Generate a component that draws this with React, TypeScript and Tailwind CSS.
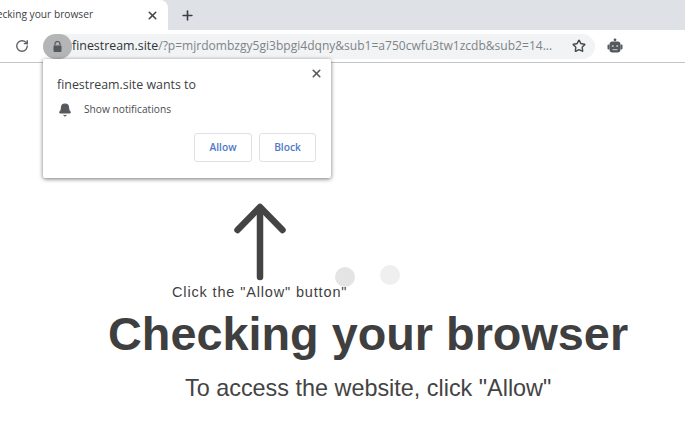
import { Plus, RotateCw, Star, X, Bell } from "lucide-react"

const ui = "font-['Open_Sans',sans-serif]"
const arial = "font-['Liberation_Sans',Arial,sans-serif]"

function TabStrip() {
  return (
    <div className="flex h-[30px] items-stretch bg-[#dee1e6]">
      <div className="flex w-[168px] items-center justify-between overflow-hidden rounded-tr-lg bg-white pr-[9px]">
        <span className={`${ui} ml-[-16px] whitespace-nowrap text-[10.2px] text-[#3c4043]`}>Checking your browser</span>
        <X className="h-[13px] w-[13px] text-[#45484c]" strokeWidth={3} />
      </div>
      <div className="ml-[12px] flex items-center">
        <Plus className="h-[15px] w-[15px] text-[#3c4043]" strokeWidth={2.6} />
      </div>
    </div>
  )
}

function Toolbar() {
  return (
    <div className="flex h-[33px] items-center border-b border-[#c4c5c8] bg-white">
      <RotateCw className="ml-[15px] h-[14px] w-[14px] text-[#5f6368]" strokeWidth={2.4} />
      <div className="ml-[14px] flex h-[25px] w-[552px] items-center rounded-full bg-[#f1f3f4]">
        <div className="flex h-[25px] w-[29px] items-center justify-center rounded-full bg-[#b4b5b7]">
          <svg className="h-[11px] w-[9px]" viewBox="0 0 9 11" fill="#55585c">
            <path d="M2 4.5V3a2.5 2.5 0 0 1 5 0v1.5" fill="none" stroke="#55585c" strokeWidth="1.2" />
            <rect x="0.5" y="4.5" width="8" height="6.5" rx="1" />
          </svg>
        </div>
        <div className={`${ui} flex-1 whitespace-nowrap text-[12.4px] text-[#7f8387]`}>
          <span className="text-[#2f3336]">finestream.site</span>
          <span className="text-[12.05px]">/?p=mjrdombzgy5gi3bpgi4dqny&amp;sub1=a750cwfu3tw1zcdb&amp;sub2=14...</span>
        </div>
        <Star className="mr-[9px] h-[14px] w-[14px] text-[#45484c]" strokeWidth={2.4} />
      </div>
      <svg className="ml-[12px] h-[16px] w-[16px]" viewBox="0 0 16 16" fill="#55585c">
        <circle cx="8" cy="1.8" r="1.4" />
        <rect x="2.5" y="3.5" width="11" height="11" rx="3" />
        <rect x="0.5" y="6.5" width="2" height="5" rx="1" />
        <rect x="13.5" y="6.5" width="2" height="5" rx="1" />
        <circle cx="5.8" cy="8" r="1.1" fill="#b9babc" />
        <circle cx="10.2" cy="8" r="1.1" fill="#b9babc" />
        <rect x="5.5" y="11" width="5" height="1.2" fill="#b9babc" />
      </svg>
    </div>
  )
}

function PermissionPopup() {
  return (
    <div className={`${ui} absolute top-[59px] left-[43px] h-[119px] w-[288px] rounded-[2px] bg-white px-[15px] pt-[16px] shadow-[0_1px_4px_rgba(0,0,0,0.55)]`}>
      <X className="absolute top-[8px] right-[8px] h-[13px] w-[13px] text-[#55585c]" strokeWidth={3} />
      <div className="ml-[-1px] text-[12.4px] leading-[20px] text-[#3c4043]">finestream.site wants to</div>
      <div className="mt-[5px] flex h-[20px] items-center">
        <Bell className="h-[14px] w-[14px] fill-[#55585c] text-[#55585c]" />
        <span className="ml-[12px] text-[10.2px] text-[#4a4d51]">Show notifications</span>
      </div>
      <div className="mt-[13px] flex justify-end gap-[7px]">
        <button className="h-[29px] w-[58px] rounded-[3px] border border-[#dfe1e5] text-[10.2px] font-semibold text-[#4f78c9]">Allow</button>
        <button className="h-[29px] w-[57px] rounded-[3px] border border-[#dfe1e5] text-[10.2px] font-semibold text-[#4f78c9]">Block</button>
      </div>
    </div>
  )
}

export default function App() {
  return (
    <div className="relative h-[447px] w-[685px] overflow-hidden bg-white">
      <TabStrip />
      <Toolbar />
      <PermissionPopup />
      {/* loading dots sit over the page text */}
      <div className="absolute top-[267px] left-[335px] h-[20px] w-[20px] rounded-full bg-[#e4e4e4]" />
      <div className="absolute top-[265px] left-[380px] h-[20px] w-[20px] rounded-full bg-[#efefef]" />
      <div className={`${arial} flex flex-col`}>
        <div className="flex w-[520px] flex-col items-center">
          <svg className="mt-[139px] h-[80px] w-[60px]" viewBox="0 0 60 80" fill="none" stroke="#444444" strokeWidth="6.5" strokeLinecap="round" strokeLinejoin="round">
            <path d="M30 75V6" />
            <path d="M7.5 28L30 5L52.5 28" />
          </svg>
        </div>
        <div className="ml-[172px] text-[14.5px] leading-[20px] tracking-[0.85px] text-[#3f3f3f]">Click the "Allow" button"</div>
        <div className="mt-[5px] ml-[108px] whitespace-nowrap text-[46.8px] leading-[55px] font-bold text-[#3f3f3f]">Checking your browser</div>
        <div className="mt-[12px] ml-[185px] whitespace-nowrap text-[23.4px] leading-[28px] text-[#444444]">To access the website, click "Allow"</div>
      </div>
    </div>
  )
}
